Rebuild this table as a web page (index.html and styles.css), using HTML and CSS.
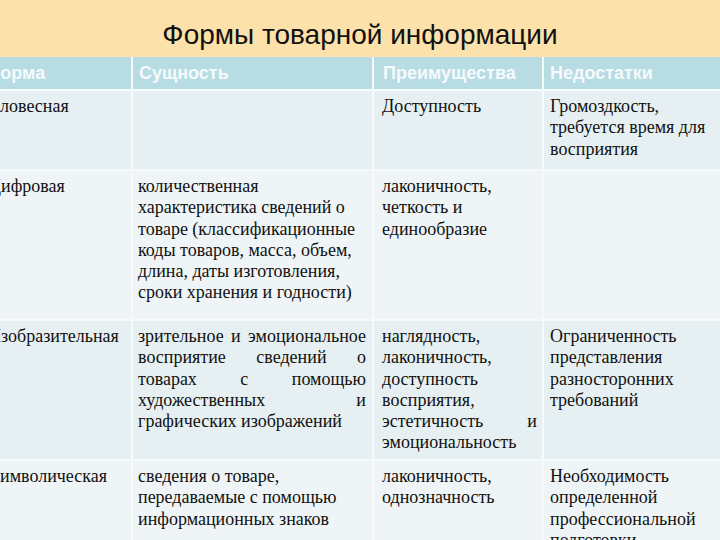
FILE: index.html
```html
<!DOCTYPE html>
<html lang="ru">
<head>
<meta charset="utf-8">
<link rel="stylesheet" href="styles.css">
</head>
<body>
<div class="slide">
  <h1 class="title">Формы товарной информации</h1>
  <table class="info-table">
    <colgroup>
      <col class="c1"><col class="c2"><col class="c3"><col class="c4">
    </colgroup>
    <thead>
      <tr>
        <th>Форма</th>
        <th>Сущность</th>
        <th>Преимущества</th>
        <th>Недостатки</th>
      </tr>
    </thead>
    <tbody>
      <tr class="odd r1">
        <td>Словесная</td>
        <td></td>
        <td>Доступность</td>
        <td>Громоздкость, требуется время для восприятия</td>
      </tr>
      <tr class="even r2">
        <td>Цифровая</td>
        <td>количественная характеристика сведений о товаре (классификационные коды товаров, масса, объем, длина, даты изготовления, сроки хранения и годности)</td>
        <td>лаконичность, четкость и единообразие</td>
        <td></td>
      </tr>
      <tr class="odd r3">
        <td>Изобразительная</td>
        <td class="just">зрительное и эмоциональное восприятие сведений о товарах с помощью художественных и графических изображений</td>
        <td class="just">наглядность, лаконичность, доступность восприятия, эстетичность и эмоциональность</td>
        <td>Ограниченность представления разносторонних требований</td>
      </tr>
      <tr class="even r4">
        <td>Символическая</td>
        <td>сведения о товаре, передаваемые с помощью информационных знаков</td>
        <td>лаконичность, однозначность</td>
        <td>Необходимость определенной профессиональной подготовки</td>
      </tr>
    </tbody>
  </table>
</div>
</body>
</html>
```

FILE: styles.css
```css
html, body {
  margin: 0;
  padding: 0;
}
body {
  width: 720px;
  height: 540px;
  overflow: hidden;
  background: #fde1aa;
}
.slide {
  width: 720px;
  height: 540px;
  overflow: hidden;
}
.title {
  margin: 0;
  height: 57px;
  box-sizing: border-box;
  padding-top: 19px;
  font-family: "Liberation Sans", Arial, sans-serif;
  font-weight: normal;
  font-size: 28px;
  line-height: 32px;
  color: #111;
  text-align: center;
}
.info-table {
  margin-left: -20px;
  border-collapse: separate;
  border-spacing: 0;
  table-layout: fixed;
  width: 760px;
}
.c1 { width: 151px; }
.c2 { width: 241px; }
.c3 { width: 170px; }
.c4 { width: 198px; }
.info-table th,
.info-table td {
  border-left: 2px solid #f6fafb;
  border-top: 2px solid #f6fafb;
  vertical-align: top;
  text-align: left;
}
.info-table th:first-child,
.info-table td:first-child {
  border-left: none;
  padding-left: 8px;
}
.info-table th:first-child { padding-left: 5px; }
.info-table th {
  border-top: none;
  background: #b7dce3;
  color: #f5fafb;
  font-family: "Liberation Sans", Arial, sans-serif;
  font-weight: bold;
  font-size: 18px;
  line-height: 22px;
  height: 32px;
  padding: 0 6px 0 6px;
  vertical-align: middle;
}
.info-table th:nth-child(3) { padding-left: 9px; }
.info-table td {
  font-family: "Liberation Serif", "Times New Roman", serif;
  font-size: 18px;
  line-height: 21.3px;
  color: #111;
  padding: 5px 6px 0 5px;
}
.info-table td:nth-child(3) { padding-left: 8px; padding-right: 5px; }
.info-table td:nth-child(4) { padding-left: 6px; padding-right: 30px; }
.odd td { background: #e6f0f2; }
.even td { background: #eff5f7; }
.r1 td { height: 73px; }
.r2 td { height: 143px; }
.r3 td { height: 133px; }
.r4 td { height: 90px; }
.info-table td.just { text-align: justify; }
```
